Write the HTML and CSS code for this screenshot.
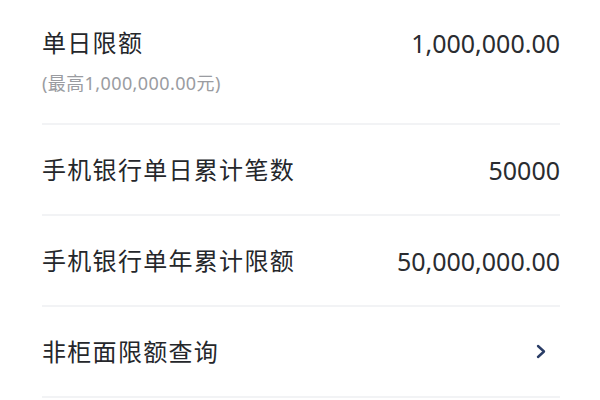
FILE: index.html
```html
<!DOCTYPE html>
<html>
<head>
  <meta charset="utf-8">
  <link rel="stylesheet" href="styles.css">
</head>
<body>
  <div class="limit-list">
    <div class="limit-row first">
      <div class="label-col">
        <div class="label">单日限额</div>
        <div class="hint">(最高1,000,000.00元)</div>
      </div>
      <div class="value">1,000,000.00</div>
    </div>
    <div class="limit-row">
      <div class="label">手机银行单日累计笔数</div>
      <div class="value">50000</div>
    </div>
    <div class="limit-row">
      <div class="label">手机银行单年累计限额</div>
      <div class="value">50,000,000.00</div>
    </div>
    <div class="limit-row link">
      <div class="label">非柜面限额查询</div>
      <svg class="chevron" width="10" height="15" viewBox="0 0 10 15">
        <path d="M2 2 L8 7.5 L2 13" fill="none" stroke="#2a3d66" stroke-width="2.4" stroke-linecap="round" stroke-linejoin="round"/>
      </svg>
    </div>
  </div>
</body>
</html>
```

FILE: styles.css
```css
* {
  margin: 0;
  padding: 0;
  box-sizing: border-box;
}

body {
  font-family: "Noto Sans", "Noto Sans CJK SC", sans-serif;
  background: #ffffff;
  color: #25272b;
  width: 600px;
  height: 400px;
  overflow: hidden;
}

.limit-list {
  padding: 0 40px 0 42px;
}

.limit-row {
  display: flex;
  align-items: center;
  justify-content: space-between;
  height: 91px;
  border-bottom: 2px solid #f2f3f5;
}

.limit-row.first {
  height: 125px;
  align-items: flex-start;
  padding-top: 27px;
}

.label {
  font-size: 24px;
  line-height: 32px;
  letter-spacing: 1.3px;
}

.hint {
  margin-top: 12px;
  font-size: 18px;
  line-height: 24px;
  letter-spacing: 0.4px;
  color: #9a9ca1;
}

.value {
  font-size: 25px;
  line-height: 32px;
  color: #2a2c30;
}

.chevron {
  margin-right: 14px;
}
```
